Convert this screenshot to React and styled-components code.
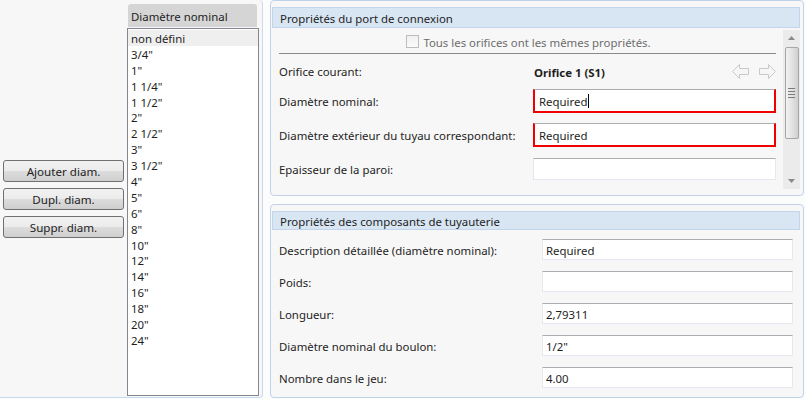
import React from 'react';
import styled, { createGlobalStyle } from 'styled-components';

const GlobalStyle = createGlobalStyle`
    body {
        margin: 0;
        background: #fcfcfc;
        font-family: 'Segoe UI', 'Noto Sans', sans-serif;
        font-size: 11.4px;
        color: #1e1e1e;
    }
`;

const Window = styled.div`
    display: flex;
    width: 806px;
    height: 399px;
    box-sizing: border-box;
    padding-bottom: 1px;
    gap: 7px;
`;

const LeftPane = styled.div`
    width: 263px;
    box-sizing: border-box;
    border: 1px solid #c9d9ee;
    border-left: none;
    border-top: none;
    border-radius: 0 4px 4px 0;
    background: #f7f7f7;
    display: flex;
    gap: 3px;
    padding: 4px 2px 1px 3px;
`;

const ButtonColumn = styled.div`
    width: 121px;
    display: flex;
    flex-direction: column;
    justify-content: center;
    gap: 6px;
    padding-bottom: 2px;
`;

const Button = styled.button`
    width: 121px;
    height: 22px;
    border: 1px solid #707070;
    border-radius: 3px;
    background: linear-gradient(#f2f2f2 0%, #ebebeb 50%, #dddddd 50%, #cfcfcf 100%);
    font: inherit;
    font-size: 11.6px;
    color: #1e1e1e;
    padding: 1px 0 0;
`;

const ListColumn = styled.div`
    width: 132px;
    display: flex;
    flex-direction: column;
`;

const ListHeader = styled.div`
    height: 23px;
    margin: 0 2px 1px 1px;
    background: #d5d5d5;
    border-radius: 3px 3px 0 0;
    padding-left: 3px;
    line-height: 25px;
`;

const ListBox = styled.div`
    flex: 1;
    border: 1px solid #828790;
    background: #fff;
    padding-top: 1px;
`;

const ListItem = styled.div`
    height: 15.9px;
    line-height: 18px;
    padding-left: 3px;
    background: ${p => (p.$selected ? '#efefef' : 'transparent')};
`;

const RightColumn = styled.div`
    width: 534px;
    display: flex;
    flex-direction: column;
    gap: 8px;
`;

const Panel = styled.div`
    height: ${p => p.$h}px;
    box-sizing: border-box;
    border: 1px solid #bfd2ea;
    border-radius: 4px;
    background: #f7f7f7;
    padding: 6px 3px 0 1px;
    display: flex;
    flex-direction: column;
`;

const PanelHeader = styled.div`
    height: ${p => p.$h}px;
    box-sizing: border-box;
    background: #d8e5f3;
    border: 1px solid #c3d5eb;
    padding-left: 7px;
    line-height: ${p => p.$h}px;
`;

const ScrollArea = styled.div`
    display: flex;
    height: 159px;
    margin-top: 2px;
`;

const ScrollContent = styled.div`
    flex: 1;
    overflow: hidden;
    padding: 2px 7px 0 7px;
`;

const CheckRow = styled.div`
    height: 18px;
    display: flex;
    align-items: center;
    justify-content: center;
    gap: 4px;
    color: #6d6d6d;
    padding-left: 2px;
`;

const CheckText = styled.span`
    padding-top: 2px;
`;

const CheckBox = styled.span`
    width: 11px;
    height: 11px;
    border: 1px solid #bcbcbc;
    background: linear-gradient(#f0f0f0, #fbfbfb);
`;

const Separator = styled.div`
    height: 1px;
    margin-top: 3px;
    background: #8a8a8a;
`;

const FieldGrid = styled.div`
    display: grid;
    grid-template-columns: ${p => p.$label}px 1fr;
    row-gap: ${p => p.$gap}px;
    align-items: center;
    margin-top: ${p => p.$top}px;
`;

const Label = styled.div`
    height: ${p => p.$h || 24}px;
    line-height: ${p => (p.$h || 24) + 2}px;
    white-space: nowrap;
`;

const CurrentValue = styled.div`
    display: flex;
    align-items: center;
    justify-content: space-between;
    height: 20px;
    padding-left: 1px;
    font-weight: bold;
`;

const CurrentText = styled.span`
    padding-top: 2px;
`;

const Arrows = styled.div`
    display: flex;
    gap: 10px;
`;

const Input = styled.div`
    height: ${p => (p.$error ? 24 : p.$h || 22)}px;
    box-sizing: border-box;
    background: #fff;
    border: ${p => (p.$error ? 2 : 1)}px solid ${p => (p.$error ? '#f00000' : '#e3e9ef')};
    border-top: 1px solid #abadb3;
    padding: 2px 0 0 ${p => (p.$error ? 4 : 3)}px;
    display: flex;
    align-items: center;
`;

const Caret = styled.span`
    width: 1px;
    height: 14px;
    background: #000;
    margin: -2px 0 0 1px;
`;

const ScrollBar = styled.div`
    width: 15px;
    background: #ebebeb;
    display: flex;
    flex-direction: column;
    align-items: center;
    padding: 0 1px;
`;

const ScrollArrow = styled.div`
    height: 16px;
    display: flex;
    align-items: center;
    justify-content: center;
`;

const Thumb = styled.div`
    width: 14px;
    height: 92px;
    margin-top: 1px;
    box-sizing: border-box;
    border: 1px solid #a6a6a6;
    border-radius: 2px;
    background: linear-gradient(90deg, #f2f2f2, #e2e2e2 50%, #cfcfcf);
    display: flex;
    flex-direction: column;
    align-items: center;
    justify-content: center;
    gap: 2px;
`;

const Grip = styled.span`
    width: 7px;
    height: 1px;
    background: #7a7a7a;
`;

const Spacer = styled.div`
    flex: 1;
`;

const LowerContent = styled.div`
    padding: 9px 7px 0 7px;
`;

const diameters = ['non défini', '3/4"', '1"', '1 1/4"', '1 1/2"', '2"', '2 1/2"', '3"', '3 1/2"', '4"', '5"', '6"', '8"', '10"', '12"', '14"', '16"', '18"', '20"', '24"'];

const ArrowIcon = ({ flip }) => (
    <svg width="17" height="15" viewBox="0 0 17 15" style={flip ? { transform: 'scaleX(-1)' } : undefined}>
        <path d="M0.5 7.5 L7.5 0.5 L7.5 4.5 L16.5 4.5 L16.5 10.5 L7.5 10.5 L7.5 14.5 Z" fill="#f6f6f6" stroke="#c9c9c9" />
    </svg>
);

const Triangle = ({ down }) => (
    <svg width="7" height="4" viewBox="0 0 7 4">
        <path d={down ? 'M0 0 L7 0 L3.5 4 Z' : 'M0 4 L7 4 L3.5 0 Z'} fill="#8a8a8a" />
    </svg>
);

export default function App() {
    return (
        <Window>
            <GlobalStyle />
            <LeftPane>
                <ButtonColumn>
                    <Button>Ajouter diam.</Button>
                    <Button>Dupl. diam.</Button>
                    <Button>Suppr. diam.</Button>
                </ButtonColumn>
                <ListColumn>
                    <ListHeader>Diamètre nominal</ListHeader>
                    <ListBox>
                        {diameters.map((d, i) => (
                            <ListItem key={d} $selected={i === 0}>{d}</ListItem>
                        ))}
                    </ListBox>
                </ListColumn>
            </LeftPane>
            <RightColumn>
                <Panel $h={196}>
                    <PanelHeader $h={21}>Propriétés du port de connexion</PanelHeader>
                    <ScrollArea>
                        <ScrollContent>
                            <CheckRow>
                                <CheckBox />
                                <CheckText>Tous les orifices ont les mêmes propriétés.</CheckText>
                            </CheckRow>
                            <Separator />
                            <FieldGrid $label={254} $gap={10} $top={7}>
                                <Label $h={20}>Orifice courant:</Label>
                                <CurrentValue>
                                    <CurrentText>Orifice 1 (S1)</CurrentText>
                                    <Arrows>
                                        <ArrowIcon />
                                        <ArrowIcon flip />
                                    </Arrows>
                                </CurrentValue>
                            </FieldGrid>
                            <FieldGrid $label={254} $gap={10} $top={8}>
                                <Label>Diamètre nominal:</Label>
                                <Input $error>Required<Caret /></Input>
                                <Label>Diamètre extérieur du tuyau correspondant:</Label>
                                <Input $error>Required</Input>
                                <Label>Epaisseur de la paroi:</Label>
                                <Input />
                                <Label />
                                <Input />
                            </FieldGrid>
                        </ScrollContent>
                        <ScrollBar>
                            <ScrollArrow><Triangle /></ScrollArrow>
                            <Thumb><Grip /><Grip /><Grip /><Grip /></Thumb>
                            <Spacer />
                            <ScrollArrow><Triangle down /></ScrollArrow>
                        </ScrollBar>
                    </ScrollArea>
                </Panel>
                <Panel $h={195}>
                    <PanelHeader $h={19}>Propriétés des composants de tuyauterie</PanelHeader>
                    <LowerContent>
                        <FieldGrid $label={263} $gap={11} $top={0}>
                            <Label $h={21}>Description détaillée (diamètre nominal):</Label>
                            <Input $h={21}>Required</Input>
                            <Label $h={21}>Poids:</Label>
                            <Input $h={21} />
                            <Label $h={21}>Longueur:</Label>
                            <Input $h={21}>2,79311</Input>
                            <Label $h={21}>Diamètre nominal du boulon:</Label>
                            <Input $h={21}>1/2"</Input>
                            <Label $h={21}>Nombre dans le jeu:</Label>
                            <Input $h={21}>4.00</Input>
                        </FieldGrid>
                    </LowerContent>
                </Panel>
            </RightColumn>
        </Window>
    );
}
